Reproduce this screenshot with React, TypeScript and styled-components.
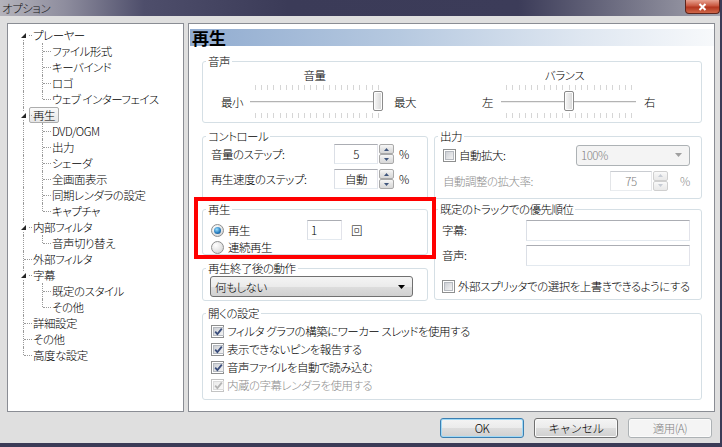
import React from "react";
import styled, { createGlobalStyle } from "styled-components";

const GlobalStyle = createGlobalStyle`
  html, body { margin: 0; padding: 0; background: #dfdfdf; }
  body {
    font-family: "Noto Sans CJK JP", "Liberation Sans", sans-serif;
    font-size: 11.5px;
    font-weight: 300;
    letter-spacing: -0.5px;
    line-height: 14px;
    font-feature-settings: "palt";
    color: #000;
  }
  * { box-sizing: border-box; }
`;

const Window = styled.div`
  width: 722px;
  height: 447px;
  display: flex;
  flex-direction: column;
  background: #dfdfdf;
  border-right: 2px solid #3b3b57;
  border-bottom: 4px solid #3b3b57;
  overflow: hidden;
`;

const TitleBar = styled.div`
  height: 16px;
  flex: none;
  display: flex;
  align-items: flex-start;
  justify-content: space-between;
  background: linear-gradient(
    to right,
    #b4b3bb 0%,
    #8e8d9e 9%,
    #4e4e6b 20%,
    #3b3b58 40%,
    #3c3c59 72%,
    #6f6f83 86%,
    #a2a2ad 100%
  );
`;

const Caption = styled.span`
  padding: 1px 0 0 2px;
  color: #151515;
`;

const CloseButton = styled.div`
  width: 35px;
  height: 14px;
  display: flex;
  align-items: center;
  justify-content: center;
  border: 1px solid #5c241b;
  border-top: none;
  border-radius: 0 0 4px 4px;
  background: linear-gradient(#e7a291, #c9573f 45%, #b3361f 55%, #cf6749);
`;

const Main = styled.div`
  display: flex;
  gap: 4px;
  height: 396px;
  padding: 7px 6px 0 7px;
`;

const TreePanel = styled.div`
  width: 177px;
  height: 389px;
  flex: none;
  border: 1px solid #8a8d94;
  background: #fff;
  padding: 3px 0 0 6px;
`;

const TreeRow = styled.div`
  display: flex;
  align-items: center;
  height: 16px;
`;

const Guide = styled.span<{ $v: "full" | "top" | "bottom"; $h?: boolean }>`
  position: relative;
  flex: none;
  width: 19px;
  height: 16px;
  &::before {
    content: "";
    position: absolute;
    left: 9px;
    top: ${(p) => (p.$v === "bottom" ? "8px" : "0")};
    bottom: ${(p) => (p.$v === "top" ? "8px" : "0")};
    border-left: 1px dotted #9a9a9a;
  }
  &::after {
    content: "";
    display: ${(p) => (p.$h ? "block" : "none")};
    position: absolute;
    left: 10px;
    width: 8px;
    top: 8px;
    border-top: 1px dotted #9a9a9a;
  }
`;

const Expander = styled.span`
  position: absolute;
  left: 5px;
  top: 4px;
  width: 9px;
  height: 9px;
  z-index: 1;
  background: #fff;
  display: flex;
  align-items: center;
  justify-content: center;
`;

const NodeLabel = styled.span<{ $selected?: boolean }>`
  margin-left: -4px;
  padding: 0 3px;
  height: 16px;
  border: 1px solid ${(p) => (p.$selected ? "#adadad" : "transparent")};
  border-radius: 2px;
  background: ${(p) => (p.$selected ? "linear-gradient(#fafafa, #e6e6e6)" : "transparent")};
  white-space: nowrap;
`;

const ContentPanel = styled.div`
  width: 527px;
  height: 389px;
  flex: none;
  border: 1px solid #8a8d94;
  background: #fff;
  padding-top: 5px;
  display: flex;
  flex-direction: column;
`;

const PageHeader = styled.div`
  height: 17px;
  margin-left: 1px;
  padding-left: 2px;
  font-size: 17px;
  font-weight: bold;
  letter-spacing: 0;
  line-height: 17px;
  background: linear-gradient(to right, #91acd0 0%, #b6c9e0 40%, #dfe7f1 75%, #f7f9fb 100%);
`;

const Pane = styled.div`
  display: flex;
  flex-direction: column;
  padding: 0 12px 0 13px;
`;

const Group = styled.fieldset<{ $mt?: number }>`
  margin: ${(p) => p.$mt ?? 0}px 0 0;
  padding: 0;
  min-width: 0;
  border: 1px solid #d5dfe5;
  border-radius: 3px;
`;

const Legend = styled.legend`
  margin-left: 3px;
  padding: 0 2px;
  line-height: 14px;
`;

const AudioBody = styled.div`
  display: flex;
  gap: 66px;
  padding: 0 0 4px 18px;
`;

const SliderUnit = styled.div`
  display: flex;
  flex-direction: column;
  align-items: center;
`;

const SliderTitle = styled.span`
  padding-right: 8px;
`;

const SliderRow = styled.div`
  display: flex;
  align-items: center;
  margin-top: 3px;
`;

const Slider = styled.div<{ $w: number; $ml: number; $mr: number }>`
  position: relative;
  width: ${(p) => p.$w}px;
  height: 33px;
  margin: 0 ${(p) => p.$mr}px 0 ${(p) => p.$ml}px;
  display: flex;
  flex-direction: column;
  justify-content: space-between;
`;

const Ticks = styled.div`
  display: flex;
  justify-content: space-between;
  height: 5px;
  padding: 0 4px 0 5px;
`;

const Tick = styled.span`
  width: 1px;
  background: #d6d6d6;
`;

const TrackLine = styled.div`
  height: 2px;
  border-top: 1px solid #b3b3b3;
  border-bottom: 1px solid #ededed;
`;

const Thumb = styled.span`
  position: absolute;
  top: 6px;
  width: 10px;
  height: 20px;
  border: 1px solid #8b8b8b;
  border-radius: 2px;
  background: linear-gradient(to right, #f8f8f8, #e4e4e4 60%, #d4d4d4);
  box-shadow: inset 0 0 0 1px #fdfdfd;
`;

const Columns = styled.div`
  display: grid;
  grid-template-columns: 226px 268px;
  column-gap: 6px;
  align-items: start;
  margin-top: 6px;
`;

const Column = styled.div`
  display: flex;
  flex-direction: column;
`;

const GroupBody = styled.div<{ $pad: string }>`
  display: flex;
  flex-direction: column;
  padding: ${(p) => p.$pad};
`;

const FieldRow = styled.div<{ $h?: number; $mt?: number }>`
  display: flex;
  align-items: center;
  height: ${(p) => p.$h ?? 20}px;
  margin-top: ${(p) => p.$mt ?? 0}px;
`;

const FieldLabel = styled.span<{ $w?: number; $disabled?: boolean }>`
  width: ${(p) => (p.$w ? `${p.$w}px` : "auto")};
  flex: none;
  white-space: nowrap;
  color: ${(p) => (p.$disabled ? "#8d8d8d" : "#000")};
`;

const TextBox = styled.span<{ $w: number; $align?: string; $disabled?: boolean }>`
  width: ${(p) => p.$w}px;
  height: ${(p) => (p.$w > 100 ? 21 : 20)}px;
  flex: none;
  display: flex;
  align-items: center;
  justify-content: ${(p) => p.$align ?? "center"};
  padding: 0 3px;
  border: 1px solid;
  border-color: ${(p) =>
    p.$disabled ? "#c9ccd1 #e6e7ea #e9ecef #e3e5e8" : "#abadb3 #e2e3ea #e3e9ef #dbdfe6"};
  background: #fff;
  color: ${(p) => (p.$disabled ? "#7d7d7d" : "#000")};
`;

const Spin = styled.span<{ $disabled?: boolean }>`
  display: flex;
  flex-direction: column;
  width: 15px;
  height: 20px;
  margin-left: 1px;
  flex: none;
  opacity: ${(p) => (p.$disabled ? 0.55 : 1)};
`;

const SpinHalf = styled.span`
  flex: 1;
  display: flex;
  align-items: center;
  justify-content: center;
  border: 1px solid #a9a9a9;
  border-radius: 2px;
  background: linear-gradient(#f7f7f7, #e4e4e4 50%, #d8d8d8);
`;

const Unit = styled.span<{ $ml: number; $disabled?: boolean }>`
  margin-left: ${(p) => p.$ml}px;
  color: ${(p) => (p.$disabled ? "#8d8d8d" : "#000")};
`;

const RedFrame = styled.div`
  position: relative;
  z-index: 1;
  margin: -4px -8px 0;
  padding: 1px 4px 0;
  border: 4px solid #ff0000;
`;

const RadioCircle = styled.span<{ $on?: boolean }>`
  width: 13px;
  height: 13px;
  flex: none;
  border-radius: 50%;
  border: 1px solid #8e8f8f;
  display: flex;
  align-items: center;
  justify-content: center;
  background: radial-gradient(circle at 35% 30%, #ffffff, #e2e2e2 60%, #c8c8c8);
  &::after {
    content: "";
    display: ${(p) => (p.$on ? "block" : "none")};
    width: 7px;
    height: 7px;
    border-radius: 50%;
    background: radial-gradient(circle at 40% 35%, #9be0ff, #2a7fc0 55%, #0f3f74);
  }
`;

const OptionText = styled.span<{ $w?: number; $gap?: number; $disabled?: boolean }>`
  margin-left: ${(p) => p.$gap ?? 3}px;
  width: ${(p) => (p.$w ? `${p.$w}px` : "auto")};
  flex: none;
  white-space: nowrap;
  color: ${(p) => (p.$disabled ? "#8d8d8d" : "#000")};
`;

const CheckBox = styled.span<{ $disabled?: boolean }>`
  width: 13px;
  height: 13px;
  flex: none;
  padding: 1px;
  border: 1px solid ${(p) => (p.$disabled ? "#c4c4c4" : "#8e8f8f")};
  background: #fff;
  display: flex;
`;

const CheckInner = styled.span<{ $disabled?: boolean }>`
  flex: 1;
  display: flex;
  align-items: center;
  justify-content: center;
  border: 1px solid ${(p) => (p.$disabled ? "#dcdcdc" : "#b5b9bf")};
  background: ${(p) =>
    p.$disabled
      ? "linear-gradient(135deg, #ececec, #f9f9f9)"
      : "linear-gradient(135deg, #cdd0d5, #f3f3f3)"};
`;

const Combo = styled.div<{ $w: number; $disabled?: boolean }>`
  width: ${(p) => p.$w}px;
  height: 21px;
  flex: none;
  display: flex;
  align-items: center;
  justify-content: space-between;
  padding: 0 7px 0 4px;
  border: 1px solid ${(p) => (p.$disabled ? "#adb2b5" : "#707070")};
  border-radius: 3px;
  color: ${(p) => (p.$disabled ? "#838383" : "#000")};
  background: ${(p) =>
    p.$disabled ? "#f4f4f4" : "linear-gradient(#f4f4f4, #ebebeb 50%, #dddddd 50%, #d1d1d1)"};
`;

const Footer = styled.div`
  display: flex;
  justify-content: flex-end;
  gap: 10px;
  padding: 6px 8px 0 0;
`;

const Button = styled.button<{ $kind?: "default" | "disabled" }>`
  width: 84px;
  height: 20px;
  padding: 0;
  font-family: inherit;
  font-size: 11.5px;
  font-weight: 300;
  letter-spacing: -0.5px;
  line-height: 14px;
  border-radius: 3px;
  border: 1px solid
    ${(p) => (p.$kind === "default" ? "#3c7fb1" : p.$kind === "disabled" ? "#adb2b5" : "#707070")};
  color: ${(p) => (p.$kind === "disabled" ? "#838383" : "#000")};
  background: ${(p) =>
    p.$kind === "disabled"
      ? "#f4f4f4"
      : "linear-gradient(#f4f4f4, #ebebeb 50%, #dddddd 50%, #d0d0d0)"};
  box-shadow: ${(p) => (p.$kind === "default" ? "inset 0 0 0 1px #9fd9f6" : "inset 0 0 0 1px #fbfbfb")};
`;

type TreeNode = {
  label: string;
  depth: 0 | 1;
  expander?: boolean;
  first?: boolean;
  last?: boolean;
  selected?: boolean;
};

const tree: TreeNode[] = [
  { label: "プレーヤー", depth: 0, expander: true, first: true },
  { label: "ファイル形式", depth: 1 },
  { label: "キーバインド", depth: 1 },
  { label: "ロゴ", depth: 1 },
  { label: "ウェブ インターフェイス", depth: 1, last: true },
  { label: "再生", depth: 0, expander: true, selected: true },
  { label: "DVD/OGM", depth: 1 },
  { label: "出力", depth: 1 },
  { label: "シェーダ", depth: 1 },
  { label: "全画面表示", depth: 1 },
  { label: "同期レンダラの設定", depth: 1 },
  { label: "キャプチャ", depth: 1, last: true },
  { label: "内部フィルタ", depth: 0, expander: true },
  { label: "音声切り替え", depth: 1, last: true },
  { label: "外部フィルタ", depth: 0 },
  { label: "字幕", depth: 0, expander: true },
  { label: "既定のスタイル", depth: 1 },
  { label: "その他", depth: 1, last: true },
  { label: "詳細設定", depth: 0 },
  { label: "その他", depth: 0 },
  { label: "高度な設定", depth: 0, last: true },
];

function Triangle() {
  return (
    <svg width="5" height="5" viewBox="0 0 5 5">
      <polygon points="5,0 5,5 0,5" fill="#262626" />
    </svg>
  );
}

function Arrow({ up, color }: { up?: boolean; color: string }) {
  return (
    <svg width="5" height="3" viewBox="0 0 5 3">
      <polygon points={up ? "0,3 5,3 2.5,0" : "0,0 5,0 2.5,3"} fill={color} />
    </svg>
  );
}

function DropArrow({ color }: { color: string }) {
  return (
    <svg width="7" height="4" viewBox="0 0 7 4">
      <polygon points="0,0 7,0 3.5,4" fill={color} />
    </svg>
  );
}

function Check({ color }: { color: string }) {
  return (
    <svg width="9" height="9" viewBox="0 0 9 9">
      <path d="M1.2 4.6 L3.4 7 L7.8 1.6" stroke={color} strokeWidth="1.8" fill="none" />
    </svg>
  );
}

function TrackSlider({ w, ml, mr, value }: { w: number; ml: number; mr: number; value: number }) {
  const ticks = Array.from({ length: 21 });
  return (
    <Slider $w={w} $ml={ml} $mr={mr}>
      <Ticks>
        {ticks.map((_, i) => (
          <Tick key={i} />
        ))}
      </Ticks>
      <TrackLine />
      <Ticks>
        {ticks.map((_, i) => (
          <Tick key={i} />
        ))}
      </Ticks>
      <Thumb style={{ left: Math.round(value * (w - 10)) }} />
    </Slider>
  );
}

function NumberField({
  value,
  w,
  disabled,
  unitGap,
}: {
  value: string;
  w: number;
  disabled?: boolean;
  unitGap: number;
}) {
  const arrow = disabled ? "#9aa3b3" : "#40567d";
  return (
    <>
      <TextBox $w={w} $disabled={disabled}>
        {value}
      </TextBox>
      <Spin $disabled={disabled}>
        <SpinHalf>
          <Arrow up color={arrow} />
        </SpinHalf>
        <SpinHalf>
          <Arrow color={arrow} />
        </SpinHalf>
      </Spin>
      <Unit $ml={unitGap} $disabled={disabled}>
        %
      </Unit>
    </>
  );
}

function CheckOption({
  label,
  checked,
  disabled,
}: {
  label: string;
  checked?: boolean;
  disabled?: boolean;
}) {
  return (
    <>
      <CheckBox $disabled={disabled}>
        <CheckInner $disabled={disabled}>
          {checked ? <Check color={disabled ? "#b4b4b4" : "#3a4d7c"} /> : null}
        </CheckInner>
      </CheckBox>
      <OptionText $disabled={disabled}>{label}</OptionText>
    </>
  );
}

export default function App() {
  return (
    <>
      <GlobalStyle />
      <Window>
        <TitleBar>
          <Caption>オプション</Caption>
          <CloseButton>
            <svg width="9" height="8" viewBox="0 0 9 8">
              <path d="M1.5 1 L7.5 7 M7.5 1 L1.5 7" stroke="#fff" strokeWidth="2" />
            </svg>
          </CloseButton>
        </TitleBar>

        <Main>
          <TreePanel>
            {tree.map((n, i) => (
              <TreeRow key={i}>
                {n.depth === 0 ? (
                  <Guide $v={n.first ? "bottom" : n.last ? "top" : "full"} $h>
                    {n.expander ? (
                      <Expander>
                        <Triangle />
                      </Expander>
                    ) : null}
                  </Guide>
                ) : (
                  <>
                    <Guide $v="full" />
                    <Guide $v={n.last ? "top" : "full"} $h />
                  </>
                )}
                <NodeLabel $selected={n.selected}>{n.label}</NodeLabel>
              </TreeRow>
            ))}
          </TreePanel>

          <ContentPanel>
            <PageHeader>再生</PageHeader>
            <Pane>
              <Group $mt={8}>
                <Legend>音声</Legend>
                <AudioBody>
                  <SliderUnit>
                    <SliderTitle>音量</SliderTitle>
                    <SliderRow>
                      <span>最小</span>
                      <TrackSlider w={133} ml={7} mr={11} value={1} />
                      <span>最大</span>
                    </SliderRow>
                  </SliderUnit>
                  <SliderUnit>
                    <SliderTitle>バランス</SliderTitle>
                    <SliderRow>
                      <span>左</span>
                      <TrackSlider w={135} ml={8} mr={8} value={0.5} />
                      <span>右</span>
                    </SliderRow>
                  </SliderUnit>
                </AudioBody>
              </Group>

              <Columns>
                <Column>
                  <Group>
                    <Legend>コントロール</Legend>
                    <GroupBody $pad="1px 0 11px 8px">
                      <FieldRow>
                        <FieldLabel $w={123}>音量のステップ:</FieldLabel>
                        <NumberField value="5" w={44} unitGap={5} />
                      </FieldRow>
                      <FieldRow $mt={5}>
                        <FieldLabel $w={123}>再生速度のステップ:</FieldLabel>
                        <NumberField value="自動" w={44} unitGap={5} />
                      </FieldRow>
                    </GroupBody>
                  </Group>

                  <RedFrame>
                    <Group>
                      <Legend>再生</Legend>
                      <GroupBody $pad="4px 0 0 8px">
                        <FieldRow>
                          <RadioCircle $on />
                          <OptionText $gap={4} $w={79}>
                            再生
                          </OptionText>
                          <TextBox $w={35} $align="flex-start">
                            1
                          </TextBox>
                          <Unit $ml={9}>回</Unit>
                        </FieldRow>
                        <FieldRow $h={14}>
                          <RadioCircle />
                          <OptionText $gap={4}>連続再生</OptionText>
                        </FieldRow>
                      </GroupBody>
                    </Group>
                  </RedFrame>

                  <Group $mt={2}>
                    <Legend>再生終了後の動作</Legend>
                    <GroupBody $pad="1px 0 3px 7px">
                      <Combo $w={203}>
                        <span>何もしない</span>
                        <DropArrow color="#000" />
                      </Combo>
                    </GroupBody>
                  </Group>
                </Column>

                <Column>
                  <Group>
                    <Legend>出力</Legend>
                    <GroupBody $pad="1px 0 7px 8px">
                      <FieldRow $h={22}>
                        <CheckBox>
                          <CheckInner />
                        </CheckBox>
                        <OptionText $w={117}>自動拡大:</OptionText>
                        <Combo $w={114} $disabled>
                          <span>100%</span>
                          <DropArrow color="#a0a0a0" />
                        </Combo>
                      </FieldRow>
                      <FieldRow $h={21} $mt={4}>
                        <FieldLabel $w={167} $disabled>
                          自動調整の拡大率:
                        </FieldLabel>
                        <NumberField value="75" w={42} unitGap={12} disabled />
                      </FieldRow>
                    </GroupBody>
                  </Group>

                  <Group $mt={3}>
                    <Legend>既定のトラックでの優先順位</Legend>
                    <GroupBody $pad="4px 0 6px 7px">
                      <FieldRow>
                        <FieldLabel $w={84}>字幕:</FieldLabel>
                        <TextBox $w={164} />
                      </FieldRow>
                      <FieldRow $mt={5}>
                        <FieldLabel $w={84}>音声:</FieldLabel>
                        <TextBox $w={164} />
                      </FieldRow>
                      <FieldRow $h={14} $mt={14}>
                        <CheckOption label="外部スプリッタでの選択を上書きできるようにする" />
                      </FieldRow>
                    </GroupBody>
                  </Group>
                </Column>
              </Columns>

              <Group $mt={5}>
                <Legend>開くの設定</Legend>
                <GroupBody $pad="2px 0 5px 8px">
                  <FieldRow $h={18}>
                    <CheckOption label="フィルタ グラフの構築にワーカー スレッドを使用する" checked />
                  </FieldRow>
                  <FieldRow $h={18}>
                    <CheckOption label="表示できないピンを報告する" checked />
                  </FieldRow>
                  <FieldRow $h={18}>
                    <CheckOption label="音声ファイルを自動で読み込む" checked />
                  </FieldRow>
                  <FieldRow $h={18}>
                    <CheckOption label="内蔵の字幕レンダラを使用する" checked disabled />
                  </FieldRow>
                </GroupBody>
              </Group>
            </Pane>
          </ContentPanel>
        </Main>

        <Footer>
          <Button $kind="default">OK</Button>
          <Button>キャンセル</Button>
          <Button $kind="disabled">適用(A)</Button>
        </Footer>
      </Window>
    </>
  );
}
